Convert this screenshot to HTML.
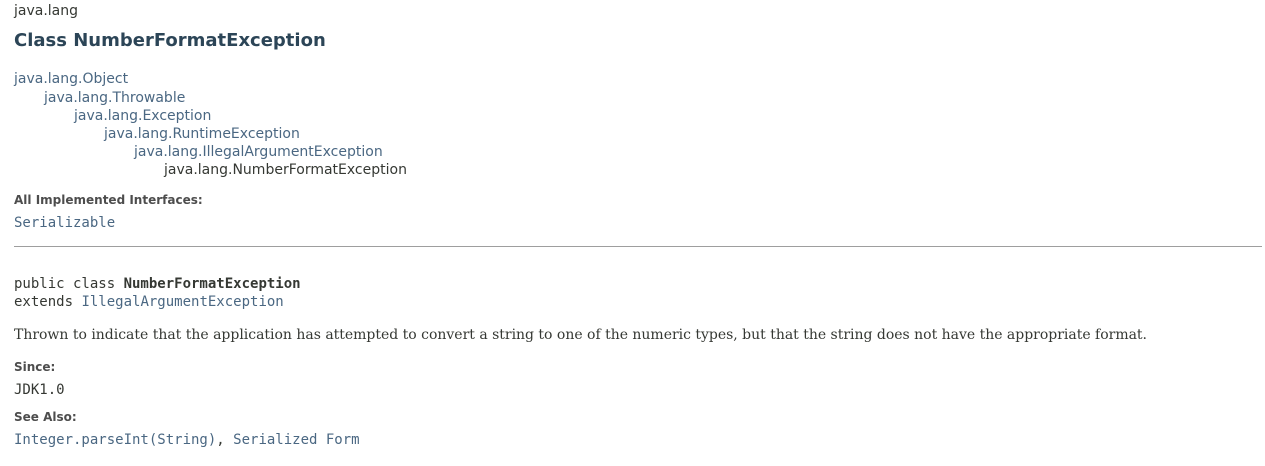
<!DOCTYPE html>
<html><head><meta charset="utf-8"><style>
body{margin:0;width:1265px;height:466px;background:#fff;position:relative;overflow:hidden;font-family:"DejaVu Sans","Liberation Sans",sans-serif;color:#353833}
div{position:absolute;white-space:nowrap;font-size:14px;line-height:18px}
.l{color:#4A6782}
.m{font-family:"DejaVu Sans Mono","Liberation Mono",monospace;font-size:14px}
.b{font-weight:bold;font-size:12px;line-height:16px;color:#4d4d4d}
</style></head><body>
<div style="left:14px;top:2px">java.lang</div>
<div style="left:14px;top:30px;font-size:18px;line-height:22px;font-weight:bold;color:#2c4557">Class NumberFormatException</div>
<div class="l" style="left:14px;top:70px">java.lang.Object</div>
<div class="l" style="left:44px;top:89px">java.lang.Throwable</div>
<div class="l" style="left:74px;top:107px">java.lang.Exception</div>
<div class="l" style="left:104px;top:125px">java.lang.RuntimeException</div>
<div class="l" style="left:134px;top:143px">java.lang.IllegalArgumentException</div>
<div style="left:164px;top:161px">java.lang.NumberFormatException</div>
<div class="b" style="left:14px;top:192px">All Implemented Interfaces:</div>
<div class="m l" style="left:14px;top:214px">Serializable</div>
<div style="left:14px;top:246px;width:1248px;height:1px;background:#9e9e9e"></div>
<div class="m" style="left:14px;top:275px">public class <b>NumberFormatException</b></div>
<div class="m" style="left:14px;top:293px">extends <span class="l">IllegalArgumentException</span></div>
<div style="left:14px;top:326px;font-family:'DejaVu Serif','Liberation Serif',serif;letter-spacing:-0.01px">Thrown to indicate that the application has attempted to convert a string to one of the numeric types, but that the string does not have the appropriate format.</div>
<div class="b" style="left:14px;top:359px">Since:</div>
<div class="m" style="left:14px;top:381px">JDK1.0</div>
<div class="b" style="left:14px;top:409px">See Also:</div>
<div class="m l" style="left:14px;top:431px">Integer.parseInt(String)<span style="color:#353833">, </span>Serialized Form</div>
</body></html>
